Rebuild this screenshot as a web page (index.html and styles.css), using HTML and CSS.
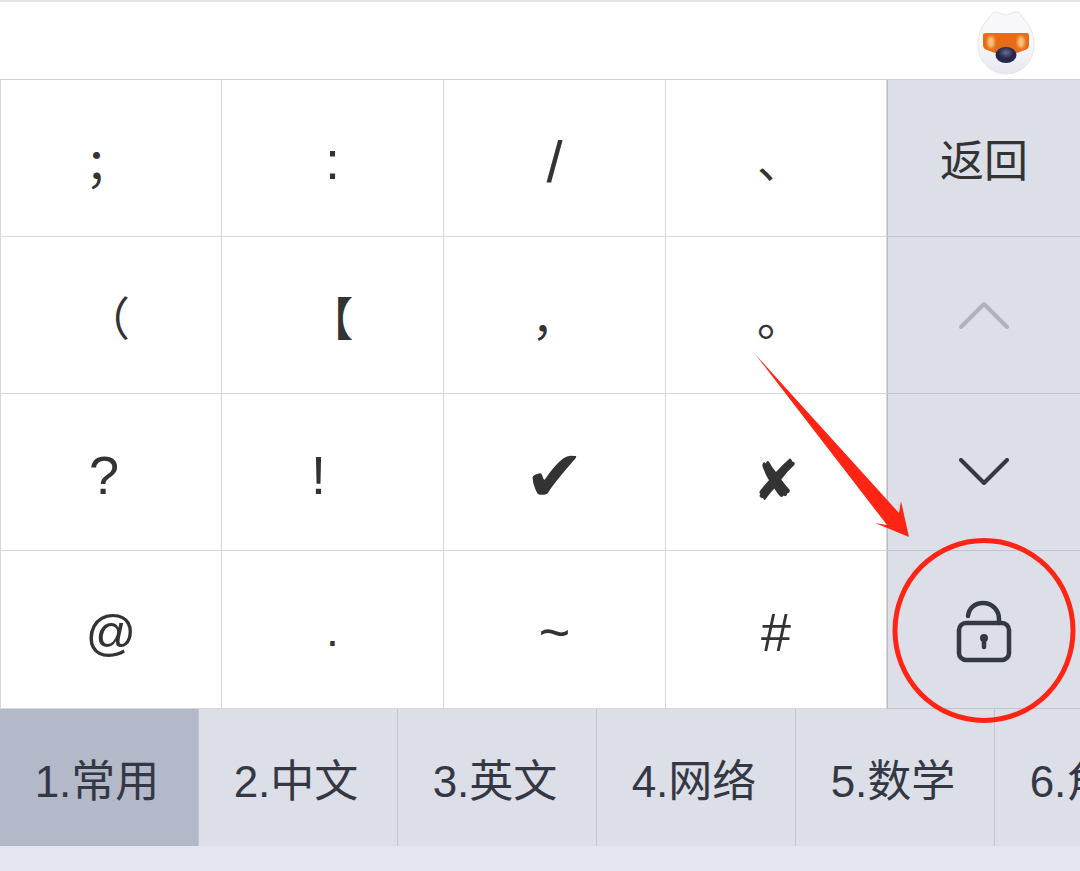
FILE: index.html
```html
<!DOCTYPE html>
<html lang="zh-CN">

<head>
  <meta charset="UTF-8" />
  <meta name="viewport" content="width=device-width, initial-scale=1.0" />
  <title>键盘符号</title>
  <link rel="stylesheet" href="styles.css">
</head>

<body>
  <div class="wrap">
    <header class="topBar">
      <svg class="mascot" width="60" height="68" viewBox="0 0 60 68">
        <defs>
          <radialGradient id="noseFill" cx="50%" cy="35%" r="60%">
            <stop offset="0" stop-color="#6b6f94" />
            <stop offset="0.6" stop-color="#25284a" />
          </radialGradient>
          <linearGradient id="headFill" x1="0" y1="0" x2="0" y2="1">
            <stop offset="0.5" stop-color="#f8f8fa" />
            <stop offset="1" stop-color="#e6e8ef" />
          </linearGradient>
          <filter id="soft"><feGaussianBlur stdDeviation="1.500" /></filter>
        </defs>
        <path d="M30 7c3 0 6-3 10-3s5 3 7 6c7 7 11 16 11 26 0 17-12 30-28 30S2 53 2 36c0-10 4-19 11-26 2-3 3-6 7-6s7 3 10 3z" fill="url(#headFill)" stroke="#e4e6ec" />
        <path d="M7 27q0-2 3-2h40q3 0 3 2v10q0 4-4 5l-8 3H19l-8-3q-4-1-4-5z" fill="#e86c18" />
        <ellipse cx="15" cy="34" rx="3.500" ry="6" fill="#fbc77e" filter="url(#soft)" />
        <ellipse cx="45" cy="34" rx="3.500" ry="6" fill="#fbc77e" filter="url(#soft)" />
        <ellipse cx="30" cy="47" rx="10.500" ry="8" fill="url(#noseFill)" />
      </svg>
    </header>

    <div class="keyGrid">
      <button class="key semi">；</button>
      <button class="key latin colon">:</button>
      <button class="key latin slash">/</button>
      <button class="key shiftRight">、</button>
      <button class="key side sideText">返回</button>

      <button class="key shiftLeft">（</button>
      <button class="key tinyLeft">【</button>
      <button class="key">，</button>
      <button class="key shiftRight">。</button>
      <button class="key side">
        <svg width="50" height="28" viewBox="0 0 50 28"><path d="M2 26 25 3l23 23" class="chevron disabled" /></svg>
      </button>

      <button class="key latin question">?</button>
      <button class="key latin bang">!</button>
      <button class="key symbol check">✔</button>
      <button class="key symbol cross">✘</button>
      <button class="key side">
        <svg width="50" height="28" viewBox="0 0 50 28"><path d="M2 2l23 23L48 2" class="chevron" /></svg>
      </button>

      <button class="key latin at">@</button>
      <button class="key">.</button>
      <button class="key latin">~</button>
      <button class="key latin">#</button>
      <button class="key side">
        <svg class="lock" width="56" height="64" viewBox="0 0 56 64">
          <path d="M12 16C13 8 19 3 27 3c9 0 16 7 16 16v4" class="lockLine" />
          <rect x="3" y="23" width="50" height="37" rx="7" class="lockLine" />
          <circle cx="28" cy="38" r="4" fill="#333842" />
          <path d="M28 38v9" class="lockLine" />
        </svg>
      </button>
    </div>

    <nav class="tabBar">
      <div class="tab active">1.常用</div>
      <div class="tab">2.中文</div>
      <div class="tab">3.英文</div>
      <div class="tab">4.网络</div>
      <div class="tab">5.数学</div>
      <div class="tab">6.角色</div>
    </nav>
    <div class="bottomBar"></div>

    <!-- red markup drawn over the keyboard -->
    <svg class="markup" width="1080" height="871" viewBox="0 0 1080 871">
      <polygon points="755,354 899,513 901,501 909,537 875,523 887,525" fill="#ff2414" />
      <ellipse cx="984" cy="630.500" rx="89" ry="90" fill="none" stroke="#ff2414" stroke-width="5" />
    </svg>
  </div>
</body>

</html>
```

FILE: styles.css
```css
* {
  margin: 0;
  padding: 0;
  box-sizing: border-box;
  font-family: "Liberation Sans", "Noto Sans CJK SC", sans-serif;
}

body {
  overflow: hidden;
}

.wrap {
  position: relative;
  width: 1080px;
  height: 871px;
  display: flex;
  flex-direction: column;
  background-color: #fff;
  color: #333;
}

/* top bar */
.topBar {
  height: 80px;
  display: flex;
  justify-content: flex-end;
  align-items: center;
  padding: 3px 44px 0 0;
  border-top: 2px solid #e4e4e4;
  border-bottom: 1px solid #cfcfcf;
}

/* symbol keys */
.keyGrid {
  display: grid;
  grid-template-columns: 222px 222px 222px 221px 193px;
  grid-template-rows: 157px 157px 157px 158px;
  height: 629px;
  border-bottom: 1px solid #b9bac0;
}

.key {
  display: flex;
  justify-content: center;
  align-items: center;
  border: 0;
  border-right: 1px solid #d8d8d8;
  border-bottom: 1px solid #d8d8d8;
  background-color: #fff;
  color: #333;
  font-size: 46px;
  font-weight: 400;
}

.key:nth-child(5n+1) {
  border-left: 1px solid #d8d8d8;
}

.key.latin {
  font-size: 54px;
  padding-top: 4px;
}

.key.at {
  font-size: 50px;
  padding-top: 6px;
}

/* the glyphs do not sit in the middle of their keys */
.key.semi {
  padding: 6px 6px 0 0;
}

.key.colon {
  padding-top: 4px;
}

.key.slash {
  font-size: 58px;
  padding-top: 6px;
}

.key.shiftLeft {
  padding-right: 8px;
}

.key.tinyLeft {
  padding-right: 4px;
}

.key.shiftRight {
  padding-left: 8px;
}

.key.question {
  padding-top: 6px;
  padding-right: 14px;
}

.key.bang {
  padding-top: 6px;
  padding-right: 28px;
}

.key.symbol {
  font-family: "DejaVu Sans", sans-serif;
  font-size: 56px;
  padding-top: 8px;
}

.key.symbol.check {
  font-size: 72px;
}

.key.symbol.cross {
  padding-top: 16px;
}

.key.side {
  background-color: #dcdee8;
  border-right: 0;
  border-bottom-color: #c2c3cd;
  border-left: 1px solid #b9bac2;
}

.key.sideText {
  font-size: 44px;
}

.chevron {
  fill: none;
  stroke: #333842;
  stroke-width: 4;
  stroke-linecap: round;
  stroke-linejoin: round;
}

.chevron.disabled {
  stroke: #b0b3bd;
}

.lock {
  margin-top: 4px;
}

.lockLine {
  fill: none;
  stroke: #333842;
  stroke-width: 4.500;
  stroke-linecap: round;
}

/* tabs */
.tabBar {
  display: flex;
  height: 137px;
  overflow: hidden;
  background-color: #dcdee8;
}

.tab {
  flex: 0 0 199px;
  display: flex;
  justify-content: center;
  align-items: center;
  padding-right: 4px;
  white-space: nowrap;
  font-size: 44px;
  color: #343844;
  border-right: 1px solid #c4c5cf;
}

.tab.active {
  background-color: #b3b9c9;
}

.bottomBar {
  flex: 1;
  background-color: #e3e6f0;
}

.markup {
  position: absolute;
  top: 0;
  left: 0;
  pointer-events: none;
}
```
